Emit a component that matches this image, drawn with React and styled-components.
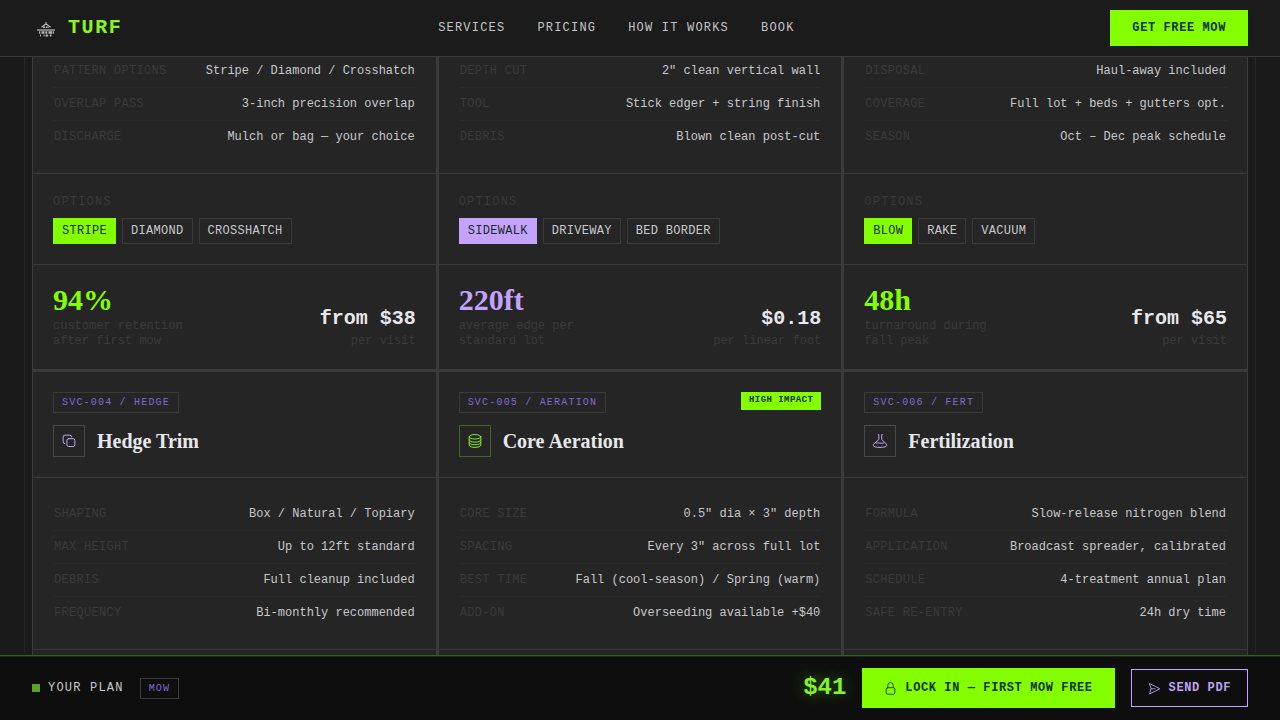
import React from "react";
import styled, { createGlobalStyle } from "styled-components";

const mono = '"Liberation Mono", monospace';
const serif = '"Liberation Serif", serif';
const lime = "#84ff00";
const violet = "#c4a3ff";
const line = "#3a3a3a";

const GlobalStyle = createGlobalStyle`
  * { box-sizing: border-box; }
  body { margin: 0; background: #1a1a1a; overflow: hidden; font-family: ${mono}; }
`;

const Page = styled.div`
  height: 720px;
  display: flex;
  flex-direction: column;
  background: #1a1a1a;
`;

const Header = styled.header`
  height: 57px;
  flex: none;
  display: flex;
  align-items: center;
  justify-content: space-between;
  padding: 0 32px;
  background: #1b1b1b;
  border-bottom: 1px solid ${line};
`;

const Logo = styled.div`
  display: flex;
  align-items: center;
  gap: 8px;
  color: #8af520;
  font-size: 20px;
  font-weight: 700;
  letter-spacing: 0.08em;
  line-height: 24px;
`;

const Nav = styled.nav`
  display: flex;
  gap: 32px;
`;

const NavLink = styled.a`
  color: #c4c4c8;
  font-size: 12px;
  letter-spacing: 0.1em;
`;

const Button = styled.button`
  display: flex;
  align-items: center;
  gap: 8px;
  height: ${(p) => p.$h}px;
  padding: 0 ${(p) => (p.$outline ? 16 : 22)}px;
  border: ${(p) => (p.$outline ? `1px solid ${violet}` : "0")};
  background: ${(p) => (p.$outline ? "transparent" : lime)};
  color: ${(p) => (p.$outline ? "#bda2f0" : "#14310a")};
  font: 700 12px ${mono};
  letter-spacing: 0.05em;
  white-space: nowrap;
`;

const Main = styled.main`
  flex: 1;
  min-height: 0;
  overflow: hidden;
  padding: 0 24px;
`;

const Frame = styled.section`
  height: 100%;
  margin: 0;
  padding: 0 7px;
  border: solid #262626;
  border-width: 0 1px;
`;

const Grid = styled.div`
  display: grid;
  grid-template-columns: repeat(3, 1fr);
  gap: 3px;
  margin-top: -2px;
  background: ${line};
  border: solid ${line};
  border-width: 0 1px;
`;

const Card = styled.article`
  display: flex;
  flex-direction: column;
  background: #252525;
`;

const CardHead = styled.div`
  height: 106px;
  padding: 20px;
  border-bottom: 1px solid ${line};
`;

const TagRow = styled.div`
  display: flex;
  justify-content: space-between;
  align-items: flex-start;
  margin-bottom: 12px;
`;

const Tag = styled.span`
  height: 21px;
  padding: 0 8px;
  border: 1px solid ${line};
  color: #8468d0;
  font-size: 10px;
  line-height: 19px;
  letter-spacing: 0.12em;
`;

const Badge = styled.span`
  height: 18px;
  padding: 1px 8px 0;
  background: ${lime};
  color: #14310a;
  font-size: 9px;
  font-weight: 700;
  line-height: 15px;
  letter-spacing: 0.05em;
`;

const TitleRow = styled.div`
  display: flex;
  align-items: center;
  gap: 12px;
`;

const IconBox = styled.span`
  width: 32px;
  height: 32px;
  display: grid;
  place-items: center;
  border: 1px solid ${(p) => (p.$lime ? "#41651c" : "#48484c")};
  color: ${(p) => (p.$lime ? "#84f02c" : "#c0a8f4")};
`;

const Title = styled.h3`
  margin: 0;
  color: #e8e8ec;
  font: 700 20px/24px ${serif};
`;

const Specs = styled.dl`
  margin: 0;
  padding: ${(p) => (p.$cut ? 0 : 20)}px 20px 20px;
  border-bottom: 1px solid ${line};
`;

const Spec = styled.div`
  height: 33px;
  display: flex;
  align-items: center;
  justify-content: space-between;
  padding: 0 1px;
  border-bottom: 1px solid #2a2a2a;
  font-size: 12px;
  line-height: 16px;
  &:last-child { height: 32px; border-bottom: 0; }
`;

const Key = styled.dt`
  color: #3a3a3a;
  letter-spacing: 0.3px;
`;

const Value = styled.dd`
  margin: 0;
  color: #c8c8cc;
`;

const Options = styled.div`
  height: 91px;
  padding: 20px;
  border-bottom: 1px solid ${line};
`;

const OptionsLabel = styled.div`
  margin-bottom: 8px;
  color: #3a3a3a;
  font-size: 12px;
  line-height: 16px;
  letter-spacing: 0.1em;
`;

const Chips = styled.div`
  display: flex;
  gap: 6px;
`;

const Chip = styled.span`
  height: 26px;
  padding: 0 8px;
  border: 1px solid ${(p) => p.$fill || line};
  background: ${(p) => p.$fill || "transparent"};
  color: ${(p) => (p.$fill ? "#1c2a1c" : "#c8c8cc")};
  font-size: 12px;
  line-height: 24px;
  letter-spacing: 0.3px;
`;

const Stats = styled.div`
  height: 104px;
  display: flex;
  align-items: flex-end;
  justify-content: space-between;
  padding: 20px;
`;

const Figure = styled.div`
  margin-bottom: 4px;
  color: ${(p) => p.$color};
  font: 700 30px/30px ${serif};
`;

const Price = styled.div`
  margin-bottom: 4px;
  color: #e8e8ec;
  font-size: 20px;
  font-weight: 700;
  line-height: 23px;
  text-align: right;
`;

const Note = styled.div`
  color: #3a3a3a;
  font-size: 12px;
  line-height: 15px;
  white-space: pre-line;
  text-align: ${(p) => (p.$right ? "right" : "left")};
`;

const Footer = styled.footer`
  height: 65px;
  flex: none;
  display: flex;
  align-items: center;
  justify-content: space-between;
  padding: 0 32px;
  background: #0e0e0e;
  border-top: 1px solid #35601a;
  box-shadow: inset 0 1px 0 #1a2a10;
`;

const Plan = styled.div`
  display: flex;
  align-items: center;
`;

const Dot = styled.span`
  width: 8px;
  height: 8px;
  margin-right: 8px;
  background: #5da026;
`;

const PlanLabel = styled.span`
  margin-right: 16px;
  color: #c8c8cc;
  font-size: 12px;
  letter-spacing: 0.1em;
`;

const Actions = styled.div`
  display: flex;
  align-items: center;
  gap: 16px;
`;

const Total = styled.span`
  color: #84f52c;
  font-size: 24px;
  font-weight: 700;
  line-height: 28px;
  text-shadow: 0 0 16px rgba(132, 255, 0, 0.4);
`;

const Svg = styled.svg`
  flex: none;
  overflow: visible;
`;

const Icon = ({ size = 14, width = 1.7, children }) => (
  <Svg width={size} height={size} viewBox="0 0 24 24" fill="none" stroke="currentColor"
    strokeWidth={width} strokeLinecap="round" strokeLinejoin="round">
    {children}
  </Svg>
);

const icons = {
  hedge: (
    <Icon>
      <rect x="8.500" y="8" width="13.500" height="13.500" rx="3" />
      <path d="M5 16.500A3 3 0 0 1 2 13.500V5a3 3 0 0 1 3-3h8.500a3 3 0 0 1 3 3" />
    </Icon>
  ),
  aeration: (
    <Icon>
      <ellipse cx="12" cy="4.800" rx="10" ry="3.800" />
      <path d="M2 5v14c0 2.200 4.500 4 10 4s10-1.800 10-4V5M2 10c0 2.200 4.500 4 10 4s10-1.800 10-4M2 14.500c0 2.200 4.500 4 10 4s10-1.800 10-4" />
    </Icon>
  ),
  fert: (
    <Icon>
      <path d="M9 1h1v8.500L1.500 17C-2 21 3 23 12 23s14-2 10.500-6L15 9.500V1h1M5.500 15.500c4-1.500 7 1.500 13 0" />
    </Icon>
  ),
};

const LogoMark = () => (
  <Svg width="28" height="28" viewBox="0 0 28 28" fill="none" stroke="#b4b4b4">
    <path d="M14 8v2M9.500 13.300l4.500-3.600 4.500 3.600" strokeWidth="1.200" />
    <path d="M11 13.300h6" strokeWidth="1.600" strokeDasharray="2 .7" />
    <path d="M5 16h18" strokeWidth="1.300" />
    <path d="M7 18.500h15" strokeWidth="2.600" strokeDasharray="1.300 1.200 3 .8 2 1.200 3.500 .6" />
    <path d="M8 21.500h11.500" strokeWidth="2" strokeDasharray="1 2.600 1 1 2.600 1.600 1.700 9" />
  </Svg>
);

const topCards = [
  {
    specs: [["PATTERN OPTIONS", "Stripe / Diamond / Crosshatch"], ["OVERLAP PASS", "3-inch precision overlap"], ["DISCHARGE", "Mulch or bag — your choice"]],
    chips: ["STRIPE", "DIAMOND", "CROSSHATCH"],
    color: lime, figure: "94%", note: "customer retention\nafter first mow", price: "from $38", unit: "per visit",
  },
  {
    specs: [["DEPTH CUT", '2" clean vertical wall'], ["TOOL", "Stick edger + string finish"], ["DEBRIS", "Blown clean post-cut"]],
    chips: ["SIDEWALK", "DRIVEWAY", "BED BORDER"],
    color: violet, figure: "220ft", note: "average edge per\nstandard lot", price: "$0.18", unit: "per linear foot",
  },
  {
    specs: [["DISPOSAL", "Haul-away included"], ["COVERAGE", "Full lot + beds + gutters opt."], ["SEASON", "Oct – Dec peak schedule"]],
    chips: ["BLOW", "RAKE", "VACUUM"],
    color: lime, figure: "48h", note: "turnaround during\nfall peak", price: "from $65", unit: "per visit",
  },
];

const bottomCards = [
  {
    tag: "SVC-004 / HEDGE", title: "Hedge Trim", icon: "hedge",
    specs: [["SHAPING", "Box / Natural / Topiary"], ["MAX HEIGHT", "Up to 12ft standard"], ["DEBRIS", "Full cleanup included"], ["FREQUENCY", "Bi-monthly recommended"]],
  },
  {
    tag: "SVC-005 / AERATION", title: "Core Aeration", icon: "aeration", badge: "HIGH IMPACT",
    specs: [["CORE SIZE", '0.5" dia × 3" depth'], ["SPACING", 'Every 3" across full lot'], ["BEST TIME", "Fall (cool-season) / Spring (warm)"], ["ADD-ON", "Overseeding available +$40"]],
  },
  {
    tag: "SVC-006 / FERT", title: "Fertilization", icon: "fert",
    specs: [["FORMULA", "Slow-release nitrogen blend"], ["APPLICATION", "Broadcast spreader, calibrated"], ["SCHEDULE", "4-treatment annual plan"], ["SAFE RE-ENTRY", "24h dry time"]],
  },
];

const SpecList = ({ rows, cut }) => (
  <Specs $cut={cut}>
    {rows.map(([k, v]) => (
      <Spec key={k}><Key>{k}</Key><Value>{v}</Value></Spec>
    ))}
  </Specs>
);

export default function App() {
  return (
    <Page>
      <GlobalStyle />
      <Header>
        <Logo><LogoMark />TURF</Logo>
        <Nav>
          {["SERVICES", "PRICING", "HOW IT WORKS", "BOOK"].map((t) => <NavLink key={t}>{t}</NavLink>)}
        </Nav>
        <Button $h={36}>GET FREE MOW</Button>
      </Header>
      <Main>
        <Frame>
          <Grid>
            {topCards.map((c) => (
              <Card key={c.figure}>
                <SpecList rows={c.specs} cut />
                <Options>
                  <OptionsLabel>OPTIONS</OptionsLabel>
                  <Chips>
                    {c.chips.map((t, i) => <Chip key={t} $fill={i === 0 ? c.color : undefined}>{t}</Chip>)}
                  </Chips>
                </Options>
                <Stats>
                  <div>
                    <Figure $color={c.color}>{c.figure}</Figure>
                    <Note>{c.note}</Note>
                  </div>
                  <div>
                    <Price>{c.price}</Price>
                    <Note $right>{c.unit}</Note>
                  </div>
                </Stats>
              </Card>
            ))}
            {bottomCards.map((c) => (
              <Card key={c.tag}>
                <CardHead>
                  <TagRow>
                    <Tag>{c.tag}</Tag>
                    {c.badge && <Badge>{c.badge}</Badge>}
                  </TagRow>
                  <TitleRow>
                    <IconBox $lime={Boolean(c.badge)}>{icons[c.icon]}</IconBox>
                    <Title>{c.title}</Title>
                  </TitleRow>
                </CardHead>
                <SpecList rows={c.specs} />
                <Options />
              </Card>
            ))}
          </Grid>
        </Frame>
      </Main>
      <Footer>
        <Plan>
          <Dot />
          <PlanLabel>YOUR PLAN</PlanLabel>
          <Tag>MOW</Tag>
        </Plan>
        <Actions>
          <Total>$41</Total>
          <Button $h={40}>
            <Icon size={13} width={1.600}>
              <rect x="4" y="10.500" width="16" height="12" rx="2.500" />
              <path d="M7 10.500V6a5 5 0 0 1 10 0V10.500" />
            </Icon>
            LOCK IN — FIRST MOW FREE
          </Button>
          <Button $h={38} $outline>
            <Icon size={13} width={1.600}>
              <path d="M3 3l19 9.500L3 22l2.500-9.500zM5.500 12.500H13" />
            </Icon>
            SEND PDF
          </Button>
        </Actions>
      </Footer>
    </Page>
  );
}
